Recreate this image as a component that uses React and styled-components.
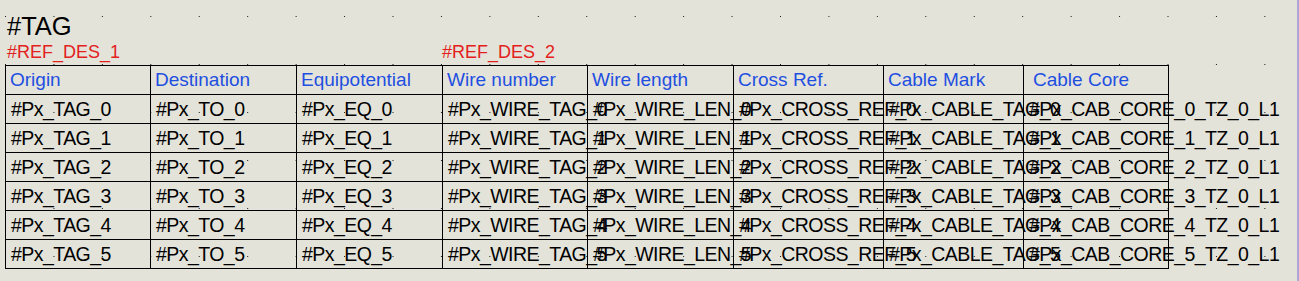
import React from "react";
import styled, { createGlobalStyle } from "styled-components";

const GlobalStyle = createGlobalStyle`
  html, body {
    margin: 0;
    padding: 0;
    overflow: hidden;
    background: #e3e3da;
  }
`;

const COLUMNS = [
  { title: "Origin", width: 145, cell: (i) => `#Px_TAG_${i}` },
  { title: "Destination", width: 146, cell: (i) => `#Px_TO_${i}` },
  { title: "Equipotential", width: 146, cell: (i) => `#Px_EQ_${i}` },
  { title: "Wire number", width: 145, cell: (i) => `#Px_WIRE_TAG_${i}` },
  { title: "Wire length", width: 146, cell: (i) => `#Px_WIRE_LEN_${i}` },
  { title: "Cross Ref.", width: 150, cell: (i) => `#Px_CROSS_REF_${i}` },
  { title: "Cable Mark", width: 140, cell: (i) => `#Px_CABLE_TAG_${i}` },
  { title: "Cable Core", width: 145, indent: 9, cell: (i) => `#Px_CAB_CORE_${i}_TZ_0_L1` },
];

const template = COLUMNS.map((c) => `${c.width}px`).join(" ");
const ROWS = [0, 1, 2, 3, 4, 5];

const Canvas = styled.div`
  position: relative;
  isolation: isolate;
  box-sizing: border-box;
  width: 100%;
  height: 281px;
  padding: 12px 0 0 5px;
  background: #e3e3da;
  border-right: 2px solid #aca7d6;
  font-family: "Liberation Sans", Arial, sans-serif;

  /* dot grid of the drawing sheet */
  &::before {
    content: "";
    position: absolute;
    inset: 0;
    z-index: -1;
    background-image: linear-gradient(90deg, #1a1a1a 1px, transparent 1px);
    background-size: 48.45px 100%;
    background-position: 5px 0;
    mask-image: linear-gradient(180deg, #000 1px, transparent 1px);
    mask-size: 100% 48px;
    mask-position: 0 16px;
  }
`;

const Title = styled.div`
  margin-left: 2px;
  font-size: 25.5px;
  line-height: 28px;
  color: #000;
`;

const RefRow = styled.div`
  display: grid;
  grid-template-columns: ${template};
  margin: 2px 0 0 1px;
  height: 20px;
`;

const RefLabel = styled.span`
  grid-column: ${(p) => p.$col};
  margin-left: ${(p) => p.$shift}px;
  font-size: 18px;
  line-height: 20px;
  color: #e3211c;
  white-space: nowrap;
`;

const Table = styled.div`
  display: grid;
  grid-template-columns: ${template};
  width: max-content;
  margin-top: 3px;
  border-top: 1px solid #000;
  border-left: 1px solid #000;
`;

const Cell = styled.div`
  box-sizing: border-box;
  height: 29px;
  padding-left: ${(p) => p.$indent}px;
  border-right: 1px solid #000;
  border-bottom: 1px solid #000;
  font-size: ${(p) => (p.$head ? "19px" : "19.5px")};
  line-height: 28px;
  letter-spacing: ${(p) => (p.$head ? "0" : "-0.55px")};
  white-space: nowrap;
  overflow: visible;
  color: ${(p) => (p.$head ? "#1f4fe0" : "#000")};
`;

export default function App() {
  return (
    <>
      <GlobalStyle />
      <Canvas>
        <Title>#TAG</Title>
        <RefRow>
          <RefLabel $col={1} $shift={1}>#REF_DES_1</RefLabel>
          <RefLabel $col={4} $shift={-1}>#REF_DES_2</RefLabel>
        </RefRow>
        <Table>
          {COLUMNS.map((c) => (
            <Cell key={c.title} $head $indent={c.indent ?? 4}>
              {c.title}
            </Cell>
          ))}
          {ROWS.map((i) =>
            COLUMNS.map((c) => (
              <Cell key={`${c.title}-${i}`} $indent={5}>
                {c.cell(i)}
              </Cell>
            ))
          )}
        </Table>
      </Canvas>
    </>
  );
}
